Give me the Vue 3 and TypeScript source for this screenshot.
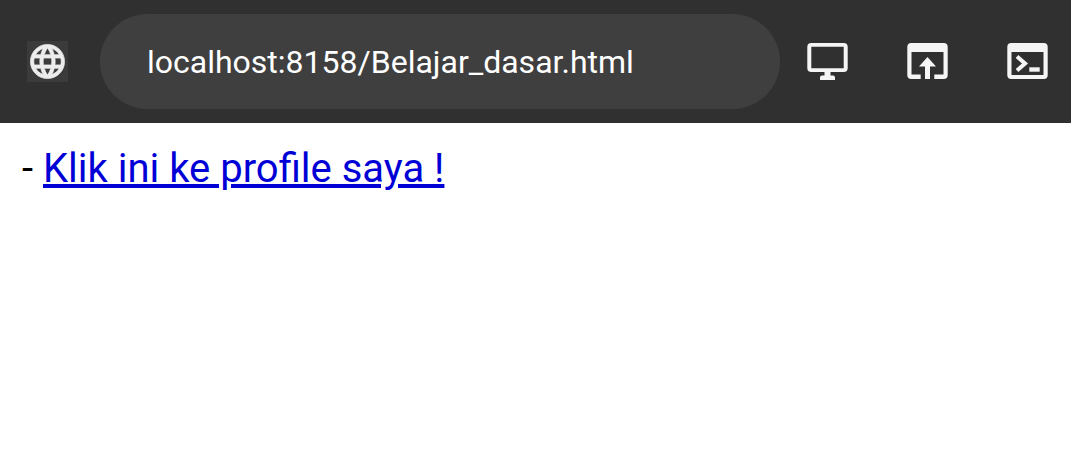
<script setup lang="ts">
import { ref } from 'vue'

const address = ref('localhost:8158/Belajar_dasar.html')
</script>

<template>
  <div class="browser">
    <header class="toolbar">
      <svg class="icon globe" viewBox="0 0 24 24" aria-hidden="true">
        <path d="M11.99 2C6.47 2 2 6.48 2 12s4.47 10 9.99 10C17.52 22 22 17.52 22 12S17.52 2 11.99 2zm6.93 6h-2.95c-.32-1.25-.78-2.45-1.38-3.56 1.84.63 3.37 1.91 4.33 3.56zM12 4.04c.83 1.2 1.48 2.53 1.91 3.96h-3.82c.43-1.43 1.08-2.76 1.91-3.96zM4.26 14C4.1 13.36 4 12.69 4 12s.1-1.36.26-2h3.38c-.08.66-.14 1.32-.14 2s.06 1.34.14 2H4.26zm.82 2h2.95c.32 1.25.78 2.45 1.38 3.56-1.84-.63-3.37-1.9-4.33-3.56zm2.95-8H5.08c.96-1.66 2.49-2.93 4.33-3.56C8.81 5.55 8.35 6.75 8.03 8zM12 19.96c-.83-1.2-1.48-2.53-1.91-3.96h3.82c-.43 1.43-1.08 2.76-1.91 3.96zM14.34 14H9.66c-.09-.66-.16-1.32-.16-2s.07-1.35.16-2h4.68c.09.65.16 1.32.16 2s-.07 1.34-.16 2zm.25 5.56c.6-1.11 1.06-2.31 1.38-3.56h2.95c-.96 1.65-2.49 2.93-4.33 3.56zM16.36 14c.08-.66.14-1.32.14-2s-.06-1.34-.14-2h3.38c.16.64.26 1.31.26 2s-.1 1.36-.26 2h-3.38z" />
      </svg>
      <input v-model="address" class="address" type="text" aria-label="Address" spellcheck="false" />
      <nav class="actions" aria-label="Page tools">
        <button type="button" class="action" aria-label="Desktop view">
          <svg class="icon" viewBox="0 0 41 41" aria-hidden="true">
            <path fill-rule="evenodd" d="M4.300 2H36.700a4 4 0 0 1 4 4V27a4 4 0 0 1-4 4H23.500V34.500H26a2 2 0 0 1 2 2V39H13V36.500a2 2 0 0 1 2-2H17.500V31H4.300a4 4 0 0 1-4-4V6a4 4 0 0 1 4-4zM4.300 5.800V27.200H36.700V5.800z" />
          </svg>
        </button>
        <button type="button" class="action" aria-label="Open in browser">
          <svg class="icon" viewBox="0 0 41 41" aria-hidden="true">
            <path d="M4.300 2H36.700a4 4 0 0 1 4 4V34a4 4 0 0 1-4 4H27.300V33.500H36.500V11H4.500V33.500H13.700V38H4.300a4 4 0 0 1-4-4V6a4 4 0 0 1 4-4zM20.500 16L29 25.500H23V38H18V25.500H12z" />
          </svg>
        </button>
        <button type="button" class="action" aria-label="Console">
          <svg class="icon" viewBox="0 0 41 41" aria-hidden="true">
            <path fill-rule="evenodd" d="M4.300 2H36.700a4 4 0 0 1 4 4V34a4 4 0 0 1-4 4H4.300a4 4 0 0 1-4-4V6a4 4 0 0 1 4-4zM4.500 11V34H36.500V11z" />
            <path class="prompt" d="M10 15.500L18 22.500L10 29.500" />
            <path d="M22.300 26.300H32.700V30.700H22.300z" />
          </svg>
        </button>
      </nav>
    </header>
    <main class="page">- <a href="#profile">Klik ini ke profile saya !</a></main>
  </div>
</template>

<style>
body {
  margin: 0;
  background: #fff;
}
</style>

<style scoped>
.browser {
  font-family: Roboto, "Liberation Sans", sans-serif;
}

.toolbar {
  display: flex;
  align-items: center;
  padding: 14px 23px 14px 27px;
  background: #303030;
}

.icon {
  display: block;
  flex: none;
  width: 41px;
  height: 41px;
  fill: #f5f5f5;
}

.globe {
  margin-right: 32px;
  background: #3b3b3b;
  fill: #ececec;
  stroke: #ececec;
  stroke-width: 0.4;
}

.address {
  box-sizing: border-box;
  flex: 1;
  min-width: 0;
  height: 95px;
  padding: 0 47px;
  border: 0;
  border-radius: 48px;
  outline: 0;
  background: #3f3f3f;
  color: #fff;
  font: 32px Roboto, "Liberation Sans", sans-serif;
}

.actions {
  display: flex;
  gap: 59px;
  margin-left: 27px;
}

.action {
  padding: 0;
  border: 0;
  background: none;
}

.prompt {
  fill: none;
  stroke: #f5f5f5;
  stroke-width: 4;
}

.page {
  padding: 22px;
  color: #000;
  font-size: 40px;
  line-height: 48px;
}

.page a {
  color: #0000d6;
  text-decoration-thickness: 4px;
}
</style>
